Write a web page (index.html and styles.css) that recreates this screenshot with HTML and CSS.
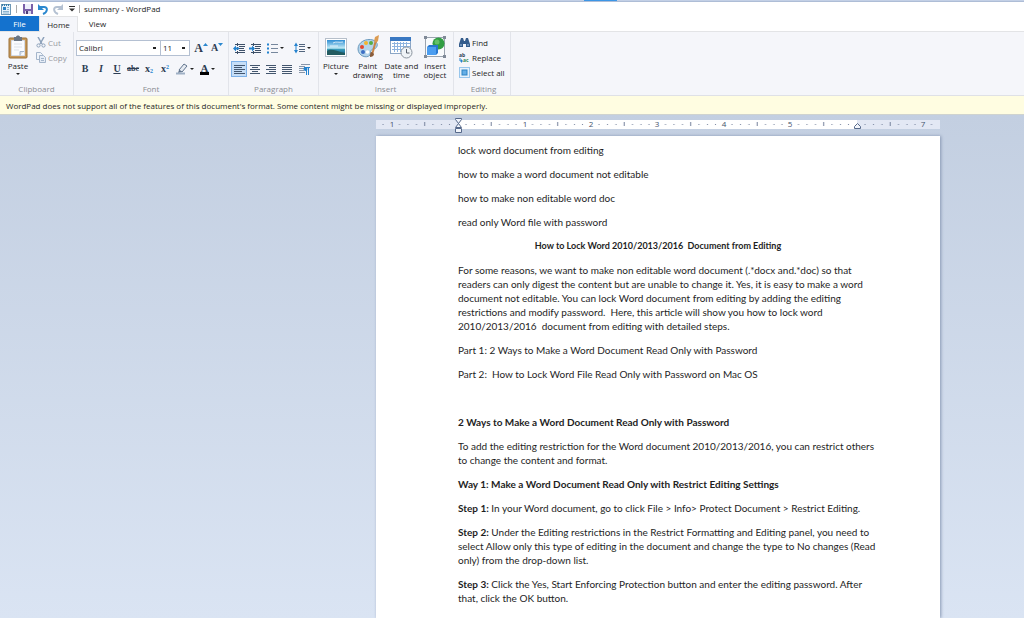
FILE: index.html
```
<!DOCTYPE html>
<html lang="en">
<head>
    <meta charset="UTF-8">
    <meta name="viewport" content="width=device-width, initial-scale=1.0">
    <title>summary - WordPad</title>
    <link rel="stylesheet" href="styles.css">
</head>
<body>
    <div class="window-edge"><span class="edge-active"></span></div>
    <header class="titlebar">
        <svg class="app-icon" width="12" height="12" viewBox="0 0 12 12">
            <rect x="1.5" y="1.5" width="9" height="10" fill="#e6f1fa" stroke="#6e98b6"/>
            <path d="M2 2h8" stroke="#397da9" stroke-width="2" stroke-dasharray="1 1"/>
            <rect x="3" y="4" width="3" height="3" fill="#2b83c6"/>
            <path d="M7 4.5h2M7 6.5h2M3 8.5h6M3 10h6" stroke="#8cb4d0"/>
        </svg>
        <span class="bar"></span>
        <button class="quick" aria-label="Save">
            <svg width="12" height="12" viewBox="0 0 12 12">
                <path d="M1 1h10v10H2L1 10z" fill="#7a60a8"/>
                <rect x="3" y="1" width="6" height="5" fill="#eef0fb"/>
                <rect x="3" y="8" width="6" height="3" fill="#d8d6ea"/>
                <rect x="4" y="8" width="2" height="3" fill="#4d3d77"/>
            </svg>
        </button>
        <button class="quick" aria-label="Undo">
            <svg width="12" height="12" viewBox="0 0 12 12"><path d="M3 4h4c4 0 4 5-1 7" fill="none" stroke="#2b88cf" stroke-width="2"/><path d="M1 1v6h6z" fill="#2b88cf"/></svg>
        </button>
        <button class="quick" aria-label="Redo">
            <svg width="12" height="12" viewBox="0 0 12 12"><path d="M9 4H5c-4 0-4 5 1 7" fill="none" stroke="#b4c1d2" stroke-width="2"/><path d="M11 1v6H5z" fill="#b4c1d2"/></svg>
        </button>
        <button class="quick customize" aria-label="Customize toolbar">
            <svg width="6" height="6" viewBox="0 0 6 6"><path d="M0 .5h6" stroke="#333"/><path d="M0 2.500h6l-3 3z" fill="#333"/></svg>
        </button>
        <span class="bar"></span>
        <span class="title">summary - WordPad</span>
    </header>

    <nav class="tabs">
        <button class="tab file">File</button>
        <button class="tab active">Home</button>
        <button class="tab">View</button>
    </nav>

    <div class="ribbon">
        <section class="group clipboard">
            <div class="tools">
                <button class="big">
                    <svg width="22" height="24" viewBox="0 0 22 24">
                        <rect x="2" y="3" width="18" height="20" rx="1" fill="#c79a5c" stroke="#9c7037"/>
                        <path d="M4.500 5.500h13v15h-13z" fill="#fafcff" stroke="#d5dbe6"/>
                        <path d="M13 20.500v-4h4" fill="#dce5f1" stroke="#a3b4c9"/>
                        <path d="M7 2h2c0-2 4-2 4 0h2v4H7z" fill="#6b7684"/>
                        <path d="M7 9h8M7 12h8M7 15h5" stroke="#dce2ea"/>
                    </svg>
                    <span>Paste</span>
                    <i class="arrow"></i>
                </button>
                <div class="stack">
                    <button class="small disabled" disabled>
                        <svg width="10" height="11" viewBox="0 0 10 11"><path d="M2 0l4 7M8 0L4 7" stroke="#8da1ba" stroke-width="1.500"/><circle cx="2.500" cy="8.500" r="1.600" fill="none" stroke="#8da1ba"/><circle cx="7.500" cy="8.500" r="1.600" fill="none" stroke="#8da1ba"/></svg>
                        Cut
                    </button>
                    <button class="small disabled" disabled>
                        <svg width="10" height="11" viewBox="0 0 10 11"><path d="M.5.500h4l2 2v5h-6z" fill="#f0f4fa" stroke="#a4b5cb"/><path d="M3.500 3.500h4l2 2v5h-6z" fill="#e5ecf6" stroke="#a4b5cb"/><path d="M5 6.500h3M5 8.500h3" stroke="#a4b5cb"/></svg>
                        Copy
                    </button>
                </div>
            </div>
            <h2>Clipboard</h2>
        </section>

        <section class="group font">
            <div class="rows">
                <div class="row">
                    <select class="font-name" aria-label="Font family"><option>Calibri</option></select>
                    <select class="font-size" aria-label="Font size"><option>11</option></select>
                    <button class="icon grow" aria-label="Grow font">A<svg width="5" height="4" viewBox="0 0 5 4"><path d="M0 3l2.500-3L5 3z" fill="#2b88cf"/></svg></button>
                    <button class="icon shrink" aria-label="Shrink font">A<svg width="5" height="4" viewBox="0 0 5 4"><path d="M0 0l2.500 3L5 0z" fill="#2b88cf"/></svg></button>
                </div>
                <div class="row">
                    <button class="icon letter"><b>B</b></button>
                    <button class="icon letter"><em>I</em></button>
                    <button class="icon letter"><u>U</u></button>
                    <button class="icon letter strike"><s>abc</s></button>
                    <button class="icon letter">x<sub>2</sub></button>
                    <button class="icon letter">x<sup>2</sup></button>
                    <button class="icon wide" aria-label="Text highlight color">
                        <svg width="12" height="12" viewBox="0 0 12 12"><path d="M3 7l5-6 3 2-5 6z" fill="#e6ebf2" stroke="#60738c"/><path d="M3 7l3 2-4 1z" fill="#60738c"/><path d="M0 10.500h9" stroke="#9fb0c5" stroke-width="2"/></svg>
                        <i class="arrow"></i>
                    </button>
                    <button class="icon wide color" aria-label="Text color"><b>A</b><i class="arrow"></i></button>
                </div>
            </div>
            <h2>Font</h2>
        </section>

        <section class="group paragraph">
            <div class="rows">
                <div class="row">
                    <button class="icon" aria-label="Decrease indent">
                        <svg width="12" height="11" viewBox="0 0 12 11"><path d="M2 1.500h10M6 3.500h6M6 5.500h5M6 7.500h6M2 9.500h10" stroke="#3d5068"/><path d="M4.500 0v11" stroke="#3d5068" stroke-dasharray="1 1"/><path d="M0 5.500l3-3v2h3v2H3v2z" fill="#2583cf"/></svg>
                    </button>
                    <button class="icon" aria-label="Increase indent">
                        <svg width="12" height="11" viewBox="0 0 12 11"><path d="M2 1.500h10M6 3.500h6M6 5.500h5M6 7.500h6M2 9.500h10" stroke="#3d5068"/><path d="M4.500 0v11" stroke="#3d5068" stroke-dasharray="1 1"/><path d="M6 5.500l-3-3v2H0v2h3v2z" fill="#2583cf"/></svg>
                    </button>
                    <button class="icon list" aria-label="Start a list">
                        <svg width="11" height="11" viewBox="0 0 11 11"><path d="M0 1.500h2M0 5.500h2M0 9.500h2" stroke="#2583cf" stroke-width="2"/><path d="M4 1.500h7M4 5.500h7M4 9.500h7" stroke="#76879d"/></svg>
                        <i class="arrow"></i>
                    </button>
                    <button class="icon list" aria-label="Line spacing">
                        <svg width="11" height="12" viewBox="0 0 11 12"><path d="M2 2v8" stroke="#2583cf"/><path d="M0 4l2-3.500L4 4zM0 8l2 3.500L4 8z" fill="#2583cf"/><path d="M5 2.500h6M5 4.500h6M5 7.500h6M5 9.500h6" stroke="#52657e"/></svg>
                        <i class="arrow"></i>
                    </button>
                </div>
                <div class="row">
                    <button class="icon selected" aria-label="Align left"><svg width="11" height="9" viewBox="0 0 11 9"><path d="M0 .5h11M0 2.500h8M0 4.500h11M0 6.500h8M0 8.500h11" stroke="#43566e"/></svg></button>
                    <button class="icon" aria-label="Center"><svg width="10" height="9" viewBox="0 0 10 9"><path d="M0 .5h10M2 2.500h6M0 4.500h10M2 6.500h6M0 8.500h10" stroke="#43566e"/></svg></button>
                    <button class="icon" aria-label="Align right"><svg width="10" height="9" viewBox="0 0 10 9"><path d="M0 .5h10M3 2.500h7M0 4.500h10M3 6.500h7M0 8.500h10" stroke="#43566e"/></svg></button>
                    <button class="icon" aria-label="Justify"><svg width="10" height="9" viewBox="0 0 10 9"><path d="M0 .5h10M0 2.500h10M0 4.500h10M0 6.500h10M0 8.500h10" stroke="#43566e"/></svg></button>
                    <button class="icon last" aria-label="Paragraph"><svg width="11" height="11" viewBox="0 0 11 11"><path d="M2 .5h9M0 2.500h6M0 4.500h5M0 6.500h5M0 8.500h6" stroke="#8796aa"/><path d="M7.500 3v8M9.500 3v8M5 3.500h6" stroke="#2583cf"/><circle cx="6.500" cy="5" r="2" fill="#2583cf"/></svg></button>
                </div>
            </div>
            <h2>Paragraph</h2>
        </section>

        <section class="group insert">
            <div class="tools">
                <button class="big">
                    <svg width="22" height="24" viewBox="0 0 22 24">
                        <defs><linearGradient id="sky" x2="0" y2="1"><stop offset="0" stop-color="#2f8ed3"/><stop offset=".55" stop-color="#c5ecf6"/><stop offset=".6" stop-color="#3a9fbd"/><stop offset="1" stop-color="#145a84"/></linearGradient></defs>
                        <rect x=".5" y="3.500" width="21" height="18" fill="#fff" stroke="#b6bfca"/>
                        <rect x="2" y="5" width="18" height="15" fill="url(#sky)"/>
                        <path d="M2 16c4-3 9 0 18 2v2H2z" fill="#225b60"/>
                        <path d="M8 8c3-2 6 0 10-1M5 11h8" stroke="#fff" opacity=".7" fill="none"/>
                    </svg>
                    <span>Picture</span>
                    <i class="arrow"></i>
                </button>
                <button class="big">
                    <svg width="22" height="24" viewBox="0 0 22 24">
                        <path d="M1 14C1 7 9 3 16 5c6 2 5 8 1 9-4 0-3 3-4 6-3 4-12 1-12-6z" fill="#b5d4eb" stroke="#6b9abd"/>
                        <circle cx="5" cy="12" r="2" fill="#e5462f"/><circle cx="9" cy="8" r="2" fill="#f3b52f"/><circle cx="14" cy="8" r="2" fill="#58ad45"/><circle cx="6" cy="17" r="2" fill="#3c6ec4"/><circle cx="10.500" cy="17" r="1.800" fill="#fff"/>
                        <path d="M15 20l4-15" stroke="#c98345" stroke-width="2"/>
                        <path d="M17 6l1-4 4-2-1 6-2 2z" fill="#dc9c52"/>
                        <path d="M13 22c0-3 0-5 2-5l2 2c0 2-2 3-4 3z" fill="#8a5c3b"/>
                    </svg>
                    <span>Paint<br>drawing</span>
                </button>
                <button class="big">
                    <svg width="24" height="24" viewBox="0 0 24 24">
                        <rect x="1.500" y="2.500" width="20" height="16" fill="#fff" stroke="#8ba6c6"/>
                        <rect x="1" y="2" width="21" height="4" fill="#3a78c2"/>
                        <path d="M3 8.500h18M3 11.500h18M3 14.500h18M5.500 7v10M8.500 7v10M11.500 7v10M14.500 7v10M17.500 7v10" stroke="#8db3df"/>
                        <circle cx="17.500" cy="17.500" r="5.500" fill="#eff3f7" stroke="#8b949e"/>
                        <path d="M17.500 14v4h3" fill="none" stroke="#58616c"/>
                    </svg>
                    <span>Date and<br>time</span>
                </button>
                <button class="big">
                    <svg width="22" height="24" viewBox="0 0 22 24">
                        <rect x="1.500" y="2.500" width="19" height="19" fill="#f8fafc" stroke="#9aa3af"/>
                        <circle cx="14.500" cy="8.500" r="6" fill="#319e43"/><circle cx="13" cy="7" r="2.500" fill="#64c166"/>
                        <path d="M3 12l2-2h9v8l-2 2H3z" fill="#2877cf"/><path d="M3 12h9v8H3z" fill="#4b9df0"/>
                        <path d="M0 1h3v3H0zM19 1h3v3h-3zM0 20h3v3H0zM19 20h3v3h-3z" fill="#7f8997"/>
                    </svg>
                    <span>Insert<br>object</span>
                </button>
            </div>
            <h2>Insert</h2>
        </section>

        <section class="group editing">
            <div class="stack">
                <button class="small">
                    <svg width="11" height="11" viewBox="0 0 11 11"><path d="M2 1h2l1 3h1l1-3h2l2 6v3H7V7H4v3H0V7z" fill="#345c8c"/><path d="M1 8h2M8 8h2" stroke="#a7c7e7"/></svg>
                    Find
                </button>
                <button class="small">
                    <svg class="replace" width="11" height="11" viewBox="0 0 11 11"><text x="0" y="5" class="glyph">ab</text><text x="4" y="10" class="glyph green">ac</text><path d="M1 6v3h2" fill="none" stroke="#2583cf"/><path d="M2 7l2 2-2 2z" fill="#2583cf"/></svg>
                    Replace
                </button>
                <button class="small">
                    <svg width="11" height="11" viewBox="0 0 11 11"><rect x=".5" y=".5" width="10" height="10" fill="#e6f2fc" stroke="#4299dc" stroke-dasharray="1 1"/><rect x="3" y="3" width="5" height="5" fill="#64aee6" stroke="#2d83c4"/></svg>
                    Select all
                </button>
            </div>
            <h2>Editing</h2>
        </section>
    </div>

    <div class="notice">WordPad does not support all of the features of this document's format. Some content might be missing or displayed improperly.</div>

    <main class="editor">
        <svg class="ruler" width="564" height="16" viewBox="0 0 564 16">
            <defs>
                <pattern id="inch" x="82" y="0" width="66.500" height="16" patternUnits="userSpaceOnUse">
                    <path d="M8 5v1M16.500 5v1M25 5v1M41.500 5v1M50 5v1M58 5v1" stroke="#73809a" stroke-width="1"/>
                    <path d="M33.200 3v4" stroke="#73809a"/>
                </pattern>
            </defs>
            <rect width="564" height="9" y="1" fill="#e3e8f4"/>
            <rect x="82" y="1" width="399" height="9" fill="#fff"/>
            <rect x="6" y="0" width="552" height="10" fill="url(#inch)"/>
            <g class="numbers">
                <text x="16" y="8">1</text>
                <text x="149" y="8">1</text>
                <text x="215" y="8">2</text>
                <text x="281" y="8">3</text>
                <text x="348" y="8">4</text>
                <text x="414" y="8">5</text>
                <text x="547" y="8">7</text>
            </g>
            <g fill="#f2f5fb" stroke="#56698a">
                <path d="M79.500-.5v1l3 4-3 4h6l-3-4 3-4v-1z"/>
                <path d="M79.500 9.500h6v4h-6z"/>
                <path d="M478.500 9.500v-2l3-3 3 3v2z"/>
            </g>
        </svg>
        <article class="paper">
            <p>lock word document from editing</p>
            <p>how to make a word document not editable</p>
            <p>how to make non editable word doc</p>
            <p>read only Word file with password</p>
            <h1>How to Lock Word 2010/2013/2016&nbsp; Document from Editing</h1>
            <p>For some reasons, we want to make non editable word document (.*docx and.*doc) so that<br>
            readers can only digest the content but are unable to change it. Yes, it is easy to make a word<br>
            document not editable. You can lock Word document from editing by adding the editing<br>
            restrictions and modify password.&nbsp; Here, this article will show you how to lock word<br>
            2010/2013/2016&nbsp; document from editing with detailed steps.</p>
            <p>Part 1: 2 Ways to Make a Word Document Read Only with Password</p>
            <p>Part 2:&nbsp; How to Lock Word File Read Only with Password on Mac OS</p>
            <p>&nbsp;</p>
            <p><b>2 Ways to Make a Word Document Read Only with Password</b></p>
            <p>To add the editing restriction for the Word document 2010/2013/2016, you can restrict others<br>
            to change the content and format.</p>
            <p><b>Way 1: Make a Word Document Read Only with Restrict Editing Settings</b></p>
            <p><b>Step 1:</b> In your Word document, go to click File &gt; Info&gt; Protect Document &gt; Restrict Editing.</p>
            <p><b>Step 2:</b> Under the Editing restrictions in the Restrict Formatting and Editing panel, you need to<br>
            select Allow only this type of editing in the document and change the type to No changes (Read<br>
            only) from the drop-down list.</p>
            <p><b>Step 3:</b> Click the Yes, Start Enforcing Protection button and enter the editing password. After<br>
            that, click the OK button.</p>
        </article>
    </main>
</body>
</html>
```
FILE: styles.css
```
* {
    box-sizing: border-box;
}
body {
    margin: 0;
    height: 100vh;
    display: flex;
    flex-direction: column;
    overflow: hidden;
    font-family: "Open Sans", "Noto Sans", sans-serif;
    font-size: 8px;
    line-height: 10px;
    color: #1e1e1e;
    background: #fff;
}
button, select {
    font: inherit;
    color: inherit;
    margin: 0;
    padding: 0;
    border: none;
    background: none;
}
svg {
    display: block;
    flex: none;
}
.window-edge {
    flex: none;
    height: 2px;
    padding-left: 57%;
    background: #c3d0e6;
    border-bottom: 1px solid #aebdd6;
}
.edge-active {
    display: block;
    width: 33px;
    height: 1px;
    background: #3c96e6;
}
.titlebar {
    flex: none;
    display: flex;
    align-items: center;
    height: 14px;
    gap: 3px;
}
.bar {
    width: 1px;
    height: 8px;
    margin: 0 1px;
    background: #aaa;
}
.app-icon + .bar {
    margin-right: 2px;
}
.customize {
    margin-left: 2px;
}

/* tabs */
.tabs {
    flex: none;
    display: flex;
    height: 16px;
    border-bottom: 1px solid #e3e4e6;
}
.tab {
    width: 39px;
}
.tab.file {
    background: #1472ce;
    color: #fff;
}
.tab.active {
    height: 16px;
    background: #f5f6fa;
    border: 1px solid #e3e4e6;
    border-bottom: none;
}

/* ribbon */
.ribbon {
    flex: none;
    display: flex;
    height: 64px;
    background: #f5f6fa;
    border-bottom: 1px solid #dfe1e6;
}
.group {
    flex: none;
    display: flex;
    flex-direction: column;
    justify-content: space-between;
    padding: 3px 2px 1px;
    border-right: 1px solid #e2e4ea;
}
.group h2 {
    margin: 0;
    font-size: 8px;
    font-weight: normal;
    text-align: center;
    color: #8a8c92;
}
.clipboard {
    width: 74px;
}
.font {
    width: 155px;
}
.paragraph {
    width: 90px;
}
.insert {
    width: 135px;
    padding-right: 3px;
}
.editing {
    width: 57px;
    padding-left: 5px;
}
.tools {
    display: flex;
    justify-content: space-between;
}
.big {
    display: flex;
    flex-direction: column;
    align-items: center;
    min-width: 32px;
    line-height: 9px;
}
.insert .big {
    min-width: 30px;
}
.big span {
    margin-top: 2px;
}
.arrow {
    width: 0;
    height: 0;
    border: 2px solid transparent;
    border-top-color: #222;
    border-bottom: none;
}
.big .arrow {
    margin-top: 3px;
}
.stack {
    display: flex;
    flex-direction: column;
}
.clipboard .stack {
    width: 35px;
}
.small {
    display: flex;
    align-items: center;
    gap: 2px;
    height: 15px;
    white-space: nowrap;
}
.disabled {
    color: #97999f;
}
.rows {
    display: flex;
    flex-direction: column;
    gap: 5px;
    padding-top: 5px;
}
.row {
    display: flex;
    align-items: center;
    height: 16px;
}
select {
    height: 16px;
    padding-left: 2px;
    border: 1px solid #b4c0d2;
    appearance: none;
    background: #fff linear-gradient(#222, #222) no-repeat right 4px center / 3px 2px;
}
.font-name {
    width: 85px;
}
.font-size {
    width: 30px;
    margin-left: -1px;
}
.icon {
    display: flex;
    align-items: center;
    justify-content: center;
    width: 16px;
    height: 16px;
    gap: 2px;
}
.font .row + .row {
    padding-left: 1px;
}
.letter, .grow, .shrink, .color {
    font-family: "Liberation Serif", serif;
    font-weight: bold;
    font-size: 10px;
    color: #2d3d53;
}
.letter {
    gap: 0;
}
.letter sub, .letter sup {
    font-size: 6px;
    line-height: 6px;
    color: #2583cf;
}
.letter sub {
    padding-top: 4px;
}
.letter sup {
    padding-bottom: 4px;
}
.strike {
    font-size: 8px;
}
.grow, .shrink {
    gap: 0;
}
.grow {
    margin-left: 3px;
    font-size: 12px;
}
.grow svg, .shrink svg {
    align-self: flex-start;
    margin-top: 3px;
}
.wide {
    width: 23px;
}
.color b {
    height: 12px;
    padding: 0 1px;
    border-bottom: 3px solid #000;
    font-size: 11px;
}
.list {
    width: 27px;
}
.paragraph .last {
    width: 18px;
}
.selected {
    background: #c6def7;
    border: 1px solid #7db1e8;
}
.replace {
    overflow: visible;
}

.notice {
    flex: none;
    height: 19px;
    padding: 5px 6px 4px;
    background: #fffde1;
    border-bottom: 1px solid #cfd3cf;
}

/* document area */
.editor {
    flex: 1;
    min-height: 0;
    display: grid;
    grid-template-columns: 376px minmax(0, 1fr) 84px;
    grid-template-rows: 17px 1fr;
    overflow: hidden;
    padding-top: 4px;
    background: linear-gradient(#c3cfe1, #dae4f3);
}
.ruler {
    grid-column: 2;
    overflow: visible;
}
.numbers {
    font-size: 8px;
    fill: #44536c;
    text-anchor: middle;
}
.glyph {
    font-size: 5px;
    font-weight: bold;
    fill: #2d3d53;
}
.green {
    fill: #2d8a55;
}
.paper {
    grid-column: 2;
    padding: 7px 82px 0;
    background: #fff;
    box-shadow: 1px 0 3px #8797b3;
    font-family: Lato, "Open Sans", sans-serif;
    font-size: 10px;
    line-height: 14px;
    white-space: nowrap;
}
.paper p, .paper h1 {
    margin: 0 0 10px;
}
.paper h1 {
    font-size: 9px;
    text-align: center;
}
```
